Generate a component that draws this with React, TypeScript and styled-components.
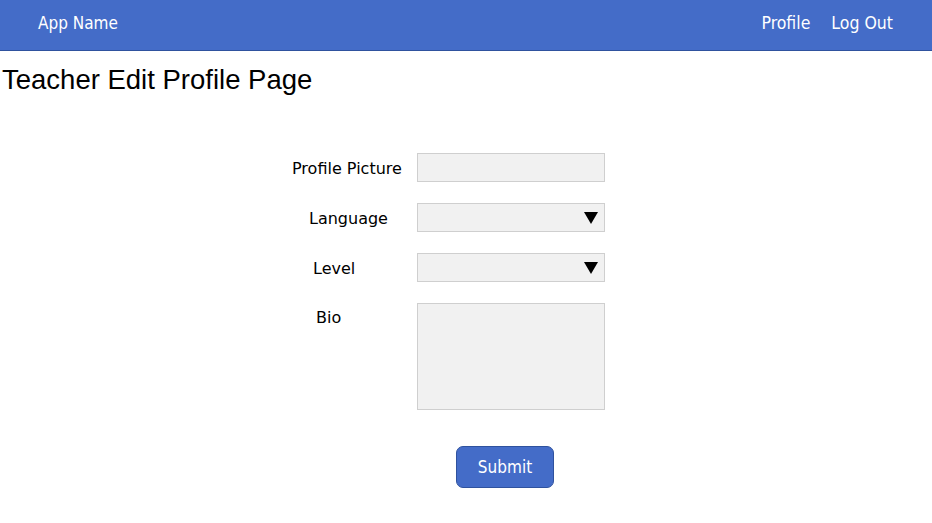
import React from "react";
import styled, { createGlobalStyle } from "styled-components";

const Global = createGlobalStyle`
  html, body { margin: 0; padding: 0; background: #fff; }
  body { font-family: "DejaVu Sans", Tahoma, sans-serif; }
`;

const Header = styled.header`
  height: 50px;
  background: #446cc8;
  border-bottom: 1px solid #2f529e;
  display: flex;
  align-items: center;
  justify-content: space-between;
  padding: 0 39px 0 38px;
  box-sizing: content-box;
  color: #fff;
  font-family: "DejaVu Sans Condensed", "DejaVu Sans", sans-serif;
  font-size: 17px;
`;

const Brand = styled.div`
  margin-top: -5px;
`;

const Nav = styled.nav`
  display: flex;
  gap: 21px;
  margin-top: -5px;
`;

const NavLink = styled.span`
  color: #fff;
  font-size: 17.5px;
`;

const Title = styled.h1`
  margin: 14px 0 0 2px;
  font-family: "Liberation Sans", Arial, sans-serif;
  font-weight: 400;
  font-size: 27.5px;
  line-height: 30px;
  color: #000;
`;

const Form = styled.form`
  display: flex;
  flex-direction: column;
  margin-top: 58px;
  gap: 21px;
`;

const Row = styled.div`
  display: flex;
  align-items: flex-start;
`;

const Label = styled.label<{ $left: number; $top?: number }>`
  width: 417px;
  box-sizing: border-box;
  padding-left: ${(p) => p.$left}px;
  padding-top: ${(p) => p.$top ?? 6}px;
  font-family: "DejaVu Sans", sans-serif;
  font-size: 16px;
  line-height: 20px;
  color: #000;
`;

const Field = styled.div<{ $h: number }>`
  width: 188px;
  height: ${(p) => p.$h}px;
  box-sizing: border-box;
  background: #f1f1f1;
  border: 1px solid #cfcfcf;
  display: flex;
  align-items: center;
  justify-content: flex-end;
  padding-right: 6px;
`;

const Arrow = styled.svg`
  width: 14px;
  height: 12px;
`;

const ButtonRow = styled.div`
  display: flex;
  padding-left: 456px;
  margin-top: 36px;
`;

const Submit = styled.button`
  width: 98px;
  height: 42px;
  background: #446cc8;
  border: 1px solid #2f529e;
  border-radius: 7px;
  color: #fff;
  font-family: "DejaVu Sans Condensed", "DejaVu Sans", sans-serif;
  font-size: 17px;
  padding: 0;
`;

const Caret = () => (
  <Arrow viewBox="0 0 14 12">
    <polygon points="0,0 14,0 7,12" fill="#000" />
  </Arrow>
);

export default function App() {
  return (
    <>
      <Global />
      <Header>
        <Brand>App Name</Brand>
        <Nav>
          <NavLink>Profile</NavLink>
          <NavLink>Log Out</NavLink>
        </Nav>
      </Header>
      <Title>Teacher Edit Profile Page</Title>
      <Form>
        <Row>
          <Label $left={292}>Profile Picture</Label>
          <Field $h={29} />
        </Row>
        <Row>
          <Label $left={309}>Language</Label>
          <Field $h={29}>
            <Caret />
          </Field>
        </Row>
        <Row>
          <Label $left={313}>Level</Label>
          <Field $h={29}>
            <Caret />
          </Field>
        </Row>
        <Row>
          <Label $left={316} $top={5}>Bio</Label>
          <Field $h={107} />
        </Row>
      </Form>
      <ButtonRow>
        <Submit type="button">Submit</Submit>
      </ButtonRow>
    </>
  );
}
